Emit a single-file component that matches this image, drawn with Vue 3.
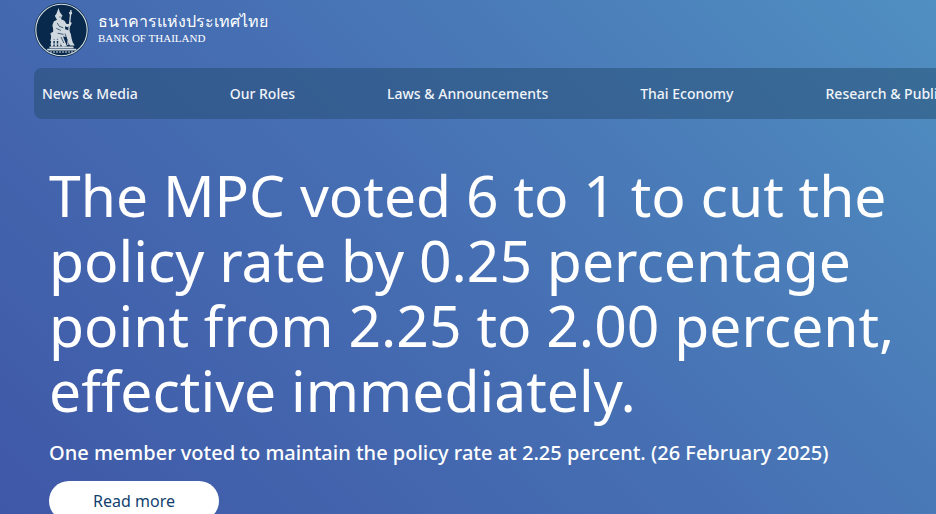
<script setup>
const links = ['News & Media', 'Our Roles', 'Laws & Announcements', 'Thai Economy', 'Research & Publications']
</script>

<template>
  <div class="page">
    <header class="header">
      <a class="brand" href="#" aria-label="Bank of Thailand">
        <svg class="emblem" viewBox="0 0 56 56" aria-hidden="true">
          <circle cx="27.5" cy="28" r="27" fill="#0d2a48" />
          <circle cx="27.5" cy="28" r="25.7" fill="#08294b" stroke="#d5e0e4" stroke-width="1.1" />
          <g fill="#cfd7df">
            <path d="M24.6 6l1.2 4 1.8 2.6 1 1.2-1.2 1.4-.2 2 3.2 1.6 2.2 3.2 2 0 1.6-2 1.6.8-1.2 3-3.2 1.4-2.4-1 .2 3 4 1.4 1.6 3.4.8 4.6 1.2 4 2 2.8-5 .2-1.8-4-1.6-4.6-3.4-.6 1.8 4.6 2.2 5.2-4 .6-3-4-1.8-4-6.8.8-.4-4 2-2.4.2-3.6-.8-4.4 1.4-3.6 3.2-1.8-1.2-2-1-2 1.4-1.6z" />
            <path d="M16.6 31l3.4-1.6 9 .8.6 2-13 1zM17 34.5h2.4v10H17zM20.8 34.5h2v10h-2zM24.2 35.5h2.2v9h-2.2zM27.6 38.5h1.8v6h-1.8zM16.4 37.6h11v1.4h-11zM16.4 41.4h12v1.2h-12z" />
            <path d="M15.5 44.6h24v1.6h-24zM13.2 46.8h29v1.8h-29z" />
            <circle cx="36.6" cy="11" r="1.6" />
          </g>
          <path d="M16 50h23" fill="none" stroke="#cfd7df" stroke-width="1" stroke-dasharray="2 1" />
          <path d="M37 8L36.3 15 35 27 33.8 43" fill="none" stroke="#cfd7df" stroke-width="1.3" />
          <g fill="none" stroke="#08294b" stroke-width=".7">
            <path d="M23.2 21l2.2 3.4 3.8 1.4M22.4 26.4l4.4 2M23.6 31.2l6 1.2M27 35l2.8 6M31 31.6l2.4 7M25.4 15h1.2" />
          </g>
        </svg>
        <span class="brand-text">
          <span class="brand-thai" lang="th">ธนาคารแห่งประเทศไทย</span>
          <span class="brand-en">BANK OF THAILAND</span>
        </span>
      </a>
      <nav class="nav" aria-label="Main">
        <a v-for="link in links" :key="link" href="#">{{ link }}</a>
      </nav>
    </header>
    <main class="hero">
      <h1>The MPC voted 6 to 1 to cut the policy rate by 0.25 percentage point from 2.25 to 2.00 percent, effective immediately.</h1>
      <p>One member voted to maintain the policy rate at 2.25 percent. (26 February 2025)</p>
      <a class="more" href="#">Read more</a>
    </main>
  </div>
</template>

<style>
body {
  margin: 0;
  overflow: hidden;
}
</style>

<style scoped>
.page {
  min-height: 100vh;
  overflow: hidden;
  box-sizing: border-box;
  background: linear-gradient(45deg, #3f58a7 0%, #466fb3 50%, #508fc1 100%);
  color: #fff;
  font-family: "Segoe UI", "Noto Sans", "Open Sans", sans-serif;
}
.header {
  padding: 2px 0 0 34px;
}
.brand {
  display: flex;
  align-items: flex-start;
  gap: 8px;
  color: #fff;
  text-decoration: none;
}
.emblem {
  width: 56px;
  height: 56px;
}
.brand-text {
  display: flex;
  flex-direction: column;
  padding-top: 8px;
}
.brand-thai {
  font-size: 16px;
  font-weight: 500;
  line-height: 22px;
  white-space: nowrap;
}
.brand-en {
  font-family: "Liberation Serif", serif;
  font-size: 11px;
  line-height: 12px;
}
.nav {
  display: flex;
  align-items: center;
  gap: 92px;
  margin-top: 10px;
  padding: 0 8px;
  height: 51px;
  border-radius: 8px 0 0 8px;
  background: rgba(36, 76, 112, 0.5);
}
.nav a {
  color: #f0f4f9;
  font-size: 14px;
  line-height: 20px;
  font-weight: 500;
  white-space: nowrap;
  text-decoration: none;
}
.hero {
  padding: 44px 24px 0 49px;
}
h1 {
  margin: 0;
  font-size: 57px;
  font-weight: 400;
  line-height: 65px;
}
p {
  margin: 15px 0 13px;
  font-size: 20px;
  font-weight: 500;
  line-height: 30px;
}
.more {
  display: inline-block;
  box-sizing: border-box;
  min-width: 170px;
  padding: 8px 24px;
  border-radius: 20px;
  background: #fff;
  color: #123f70;
  font-size: 16px;
  line-height: 24px;
  text-align: center;
  text-decoration: none;
}
</style>
